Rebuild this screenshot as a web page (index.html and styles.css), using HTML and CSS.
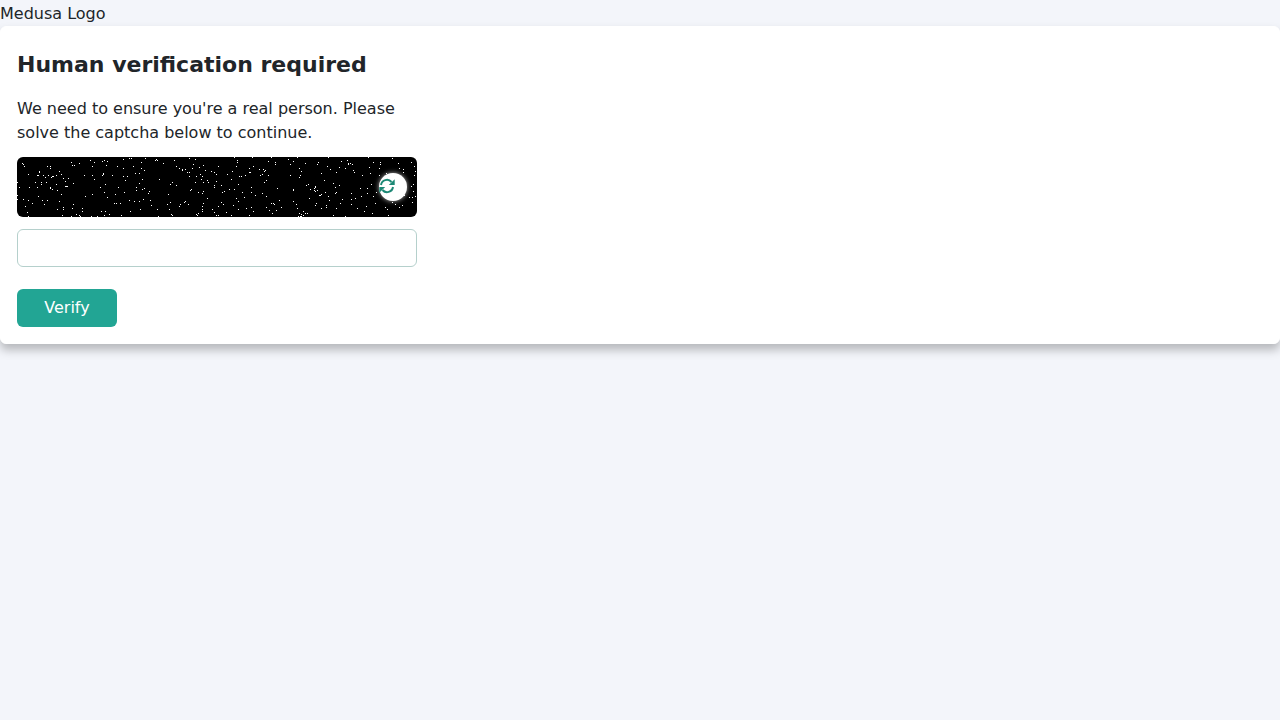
FILE: index.html
```
<!DOCTYPE html>
<html lang="en">
<head>
    <meta charset="UTF-8">
    <meta name="viewport" content="width=device-width, initial-scale=1.0">
    <title>Human verification required</title>
    <link rel="stylesheet" href="styles.css">
</head>
<body>
    <header class="logo">Medusa Logo</header>

    <main class="card">
        <form class="captcha-form">
            <h1>Human verification required</h1>
            <p id="captcha-hint">We need to ensure you're a real person. Please solve the captcha below to continue.</p>

            <div class="captcha">
                <canvas class="captcha-image" id="captcha" width="400" height="60"></canvas>
                <button type="button" class="captcha-refresh" aria-label="Refresh captcha">
                    <svg viewBox="0 0 16 16" aria-hidden="true">
                        <path class="arc" d="M2 7A6 6 0 0 1 12.5 4M14 9A6 6 0 0 1 3.5 12"/>
                        <path class="head" d="M15.7 1.2v5.9H9.8zM.3 14.8V8.9h5.9z"/>
                    </svg>
                </button>
            </div>

            <input type="text" class="captcha-input" name="captcha" aria-label="Captcha" aria-describedby="captcha-hint" autocomplete="off">
            <button type="submit" class="btn">Verify</button>
        </form>
    </main>

    <script src="captcha.js"></script>
</body>
</html>
```
FILE: styles.css
```
* {
    box-sizing: border-box;
}

body {
    margin: 0;
    min-height: 100vh;
    background: #f3f5fa;
    color: #212529;
    font-family: "DejaVu Sans", sans-serif;
    font-size: 16px;
    line-height: 24px;
}

.logo {
    padding-top: 2px;
}

/* Card */
.card {
    padding: 16px;
    background: #fff;
    border: 1px solid #fff;
    border-radius: 6px;
    box-shadow: 0 6px 10px rgba(0, 0, 0, 0.25);
}

.captcha-form {
    max-width: 400px;
}

h1 {
    margin: 0 0 10px;
    font-size: 22px;
    line-height: 44px;
}

p {
    margin: 0 0 12px;
}

/* Captcha */
.captcha {
    position: relative;
    margin-bottom: 12px;
}

.captcha-image {
    display: block;
    width: 100%;
    border-radius: 6px;
}

.captcha-refresh {
    position: absolute;
    top: 16px;
    right: 10px;
    display: flex;
    align-items: center;
    width: 28px;
    height: 28px;
    padding: 0 0 2px;
    background: #fff;
    border: none;
    border-radius: 50%;
    box-shadow: 0 0 5px rgba(255, 255, 255, 0.7);
    color: #1c8875;
    cursor: pointer;
}

.captcha-refresh svg {
    width: 16px;
    height: 16px;
}

.captcha-refresh .arc {
    fill: none;
    stroke: currentColor;
    stroke-width: 2;
}

.captcha-refresh .head {
    fill: currentColor;
}

.captcha-input {
    display: block;
    width: 100%;
    height: 38px;
    margin-bottom: 22px;
    padding: 6px 12px;
    background: #fff;
    border: 1px solid #b5d0cc;
    border-radius: 6px;
    color: inherit;
    font: inherit;
}

/* Buttons */
.btn {
    display: block;
    min-width: 100px;
    padding: 7px 24px;
    background: #22a594;
    border: none;
    border-radius: 6px;
    color: #fff;
    font: inherit;
    cursor: pointer;
}
```
FILE: captcha.js
```
const canvas = document.getElementById('captcha');
const ctx = canvas.getContext('2d');
let seed = 90217;

function random() {
    seed = (seed * 16807) % 2147483647;
    return seed / 2147483647;
}

// black background with white noise
function drawNoise() {
    ctx.fillStyle = '#000';
    ctx.fillRect(0, 0, canvas.width, canvas.height);
    ctx.fillStyle = '#fff';
    for (let i = 0; i < 400; i++) {
        const x = Math.floor(random() * canvas.width);
        const y = Math.floor(random() * canvas.height);
        ctx.fillRect(x, y, 1, 1);
    }
}

drawNoise();
document.querySelector('.captcha-refresh').addEventListener('click', drawNoise);
```
